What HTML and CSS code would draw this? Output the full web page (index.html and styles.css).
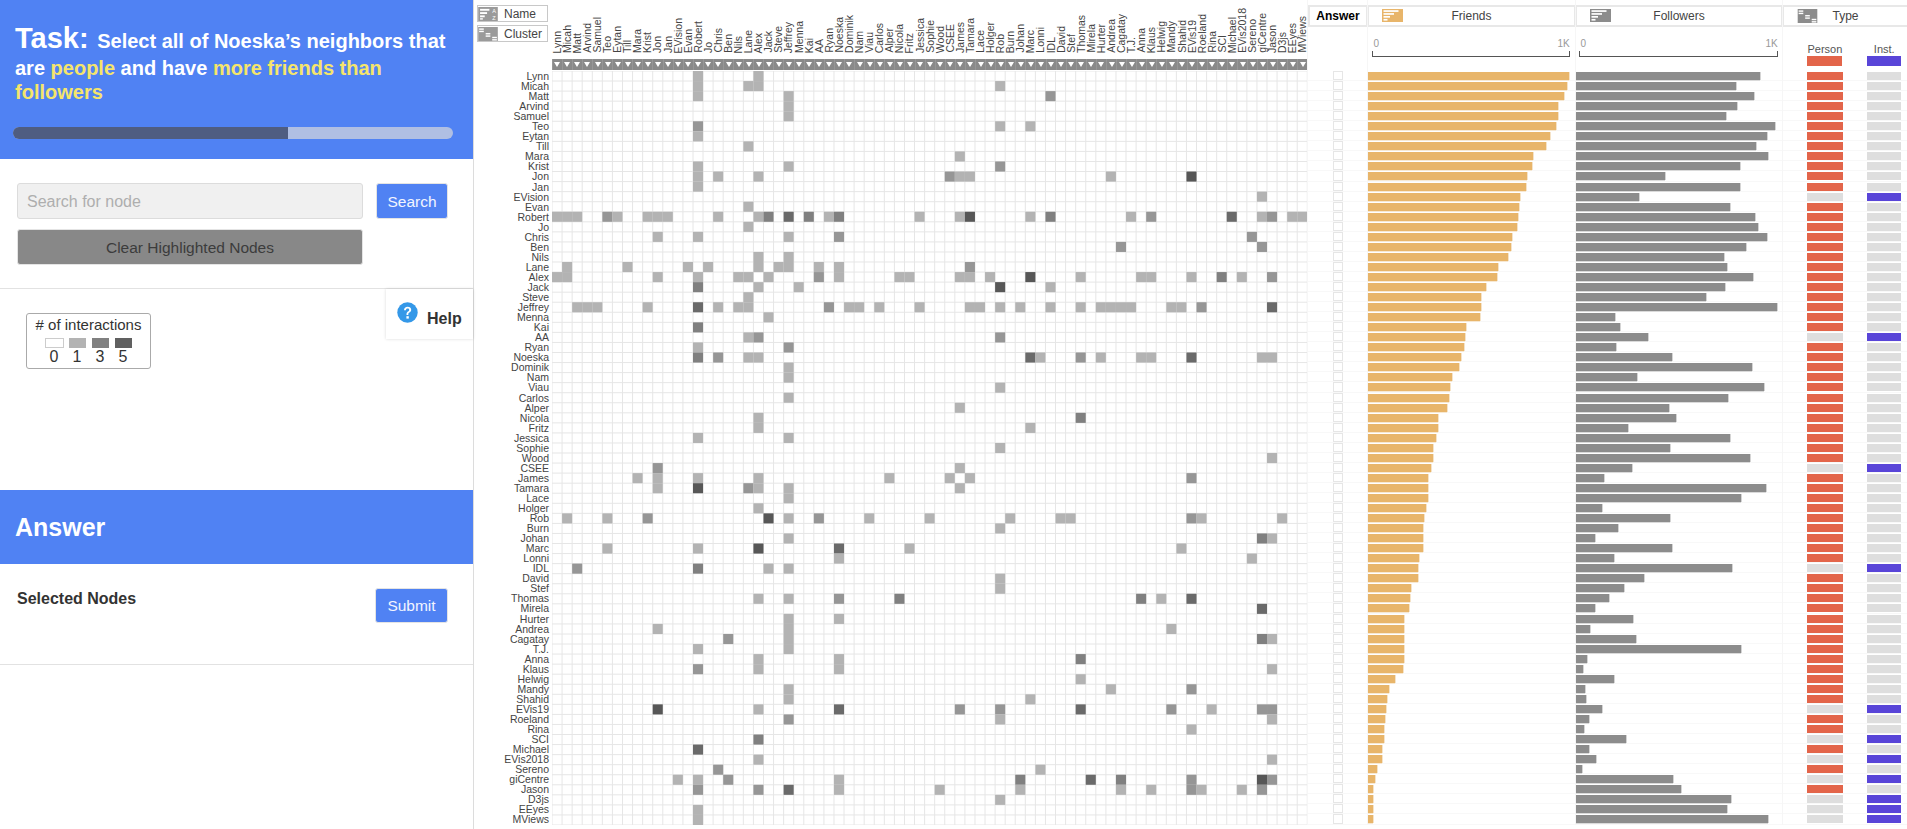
FILE: index.html
```html
<!DOCTYPE html>
<html lang="en">
<head>
    <meta charset="UTF-8">
    <title>Task</title>
    <link rel="stylesheet" href="styles.css">
</head>
<body>
<div class="app">
    <div class="sidebar">
        <div class="task">
            <div class="task-text">
                <span class="task-label">Task:</span>
                <span>Select all of Noeska’s neighbors that</span>
                <span>are</span>
                <span class="hl">people</span>
                <span>and have</span>
                <span class="hl">more friends than</span>
                <span class="hl">followers</span>
            </div>
            <div class="progress"><div class="progress-fill"></div></div>
        </div>
        <div class="search">
            <input class="search-input" type="text" placeholder="Search for node">
            <button class="btn btn-blue">Search</button>
            <button class="btn btn-clear">Clear Highlighted Nodes</button>
        </div>
        <div class="info">
            <div class="legend">
                <div class="legend-title"># of interactions</div>
                <div class="legend-scale">
                    <div class="legend-item"><span class="swatch swatch-0"></span>0</div>
                    <div class="legend-item"><span class="swatch swatch-1"></span>1</div>
                    <div class="legend-item"><span class="swatch swatch-3"></span>3</div>
                    <div class="legend-item"><span class="swatch swatch-5"></span>5</div>
                </div>
            </div>
            <div class="help">
                <svg class="help-icon" width="21" height="21" viewBox="0 0 21 21">
                    <circle cx="10.5" cy="10.5" r="10.2" fill="#3498e8"/>
                    <path d="M7 8.2c0-2.1 1.5-3.4 3.6-3.4 2.100 0 3.600 1.200 3.600 3 0 1.400-.8 2.100-1.800 2.800-.8.600-1.100 1-1.100 1.900v.4H9.500v-.6c0-1.300.5-2 1.500-2.700.8-.6 1.200-1 1.200-1.700 0-.8-.6-1.300-1.600-1.300-1 0-1.600.6-1.700 1.600z" fill="#fff"/>
                    <rect x="9.400" y="14.200" width="2.400" height="2.400" fill="#fff"/>
                </svg>
                <span class="help-text">Help</span>
            </div>
        </div>
        <div class="answer-head">Answer</div>
        <div class="answer-body">
            <div class="selected">Selected Nodes</div>
            <button class="btn btn-blue btn-submit">Submit</button>
        </div>
    </div>

    <div class="vis">
        <div class="sort-btns">
            <div class="sort-btn">
                <svg class="sort-icon" width="20" height="14" viewBox="0 0 21 15">
                    <rect width="21" height="15" fill="#9a9a9a"/>
                    <rect x="2" y="2" width="10" height="2" fill="#fff"/>
                    <rect x="2" y="5.500" width="7.500" height="2" fill="#fff"/>
                    <rect x="2" y="9" width="5" height="2" fill="#fff"/>
                    <rect x="2" y="12" width="3" height="1.500" fill="#fff"/>
                    <text x="17" y="6.500" class="az">A</text>
                    <text x="17" y="13.500" class="az">Z</text>
                </svg>
                <span>Name</span>
            </div>
            <div class="sort-btn">
                <svg class="sort-icon" width="20" height="14" viewBox="0 0 21 15">
                    <rect width="21" height="15" fill="#9a9a9a"/>
                    <rect x="1" y="1.500" width="5" height="1.500" fill="#fff"/>
                    <rect x="1" y="4" width="5" height="1.500" fill="#fff"/>
                    <rect x="8" y="6.500" width="5" height="1.500" fill="#fff"/>
                    <rect x="8" y="9" width="5" height="1.500" fill="#fff"/>
                    <rect x="15" y="10.500" width="5" height="1.500" fill="#fff"/>
                    <rect x="15" y="13" width="5" height="1.500" fill="#fff"/>
                </svg>
                <span>Cluster</span>
            </div>
        </div>

        <div class="matrix-head">
            <div class="col-labels" id="colLabels"></div>
            <div class="col-sorts" id="colSorts"></div>
        </div>

        <div class="head-col">
            <div class="tab tab-answer">Answer</div>
        </div>

        <div class="head-col">
            <div class="tab">
                <svg class="tab-icon" width="21" height="13" viewBox="0 0 21 13">
                    <rect width="21" height="13" fill="#e8b56a"/>
                    <rect x="1.500" y="1.200" width="15" height="1.700" fill="#fff"/>
                    <rect x="1.500" y="4.100" width="10.500" height="1.700" fill="#fff"/>
                    <rect x="1.500" y="7" width="6.500" height="1.700" fill="#fff"/>
                    <rect x="1.500" y="9.900" width="4" height="1.700" fill="#fff"/>
                </svg>
                <span>Friends</span>
            </div>
            <div class="axis axis-friends">
                <div class="axis-labels"><span>0</span><span>1K</span></div>
                <div class="axis-line"></div>
            </div>
        </div>

        <div class="head-col">
            <div class="tab">
                <svg class="tab-icon" width="21" height="13" viewBox="0 0 21 13">
                    <rect width="21" height="13" fill="#8c8c8c"/>
                    <rect x="1.500" y="1.200" width="15" height="1.700" fill="#fff"/>
                    <rect x="1.500" y="4.100" width="10.500" height="1.700" fill="#fff"/>
                    <rect x="1.500" y="7" width="6.500" height="1.700" fill="#fff"/>
                    <rect x="1.500" y="9.900" width="4" height="1.700" fill="#fff"/>
                </svg>
                <span>Followers</span>
            </div>
            <div class="axis axis-followers">
                <div class="axis-labels"><span>0</span><span>1K</span></div>
                <div class="axis-line"></div>
            </div>
        </div>

        <div class="head-col">
            <div class="tab tab-type">
                <svg class="tab-icon" width="21" height="14" viewBox="0 0 21 15">
                    <rect width="21" height="15" fill="#8c8c8c"/>
                    <rect x="1" y="1.500" width="5" height="1.500" fill="#fff"/>
                    <rect x="1" y="4" width="5" height="1.500" fill="#fff"/>
                    <rect x="8" y="6.500" width="5" height="1.500" fill="#fff"/>
                    <rect x="8" y="9" width="5" height="1.500" fill="#fff"/>
                    <rect x="15" y="10.500" width="5" height="1.500" fill="#fff"/>
                    <rect x="15" y="13" width="5" height="1.500" fill="#fff"/>
                </svg>
                <span>Type</span>
            </div>
            <div class="type-legend">
                <div class="type-key"><span>Person</span><div class="key-swatch person"></div></div>
                <div class="type-key key-inst"><span>Inst.</span><div class="key-swatch inst"></div></div>
            </div>
        </div>

        <div class="row-labels" id="rowLabels"></div>
        <div class="matrix" id="matrix"></div>
        <div class="body-col answer-col" id="answerCol"></div>
        <div class="body-col" id="friendsCol"></div>
        <div class="body-col" id="followersCol"></div>
        <div class="body-col" id="typeCol"></div>
    </div>
</div>
<script src="app.js"></script>
</body>
</html>
```

FILE: styles.css
```css
*{ padding: 0; margin: 0; box-sizing: border-box;}
html,body{
    height: 100%;
    overflow: hidden;
    background: #fff;
    font-family: "Liberation Sans", Arial, sans-serif;
    color: #333;
}
.app{
    display: flex;
    width: 1907px;
    height: 829px;
}

/* left panel */
.sidebar{
    width: 474px;
    flex: none;
    border-right: 1px solid #dcdcdc;
}
.task{
    height: 159px;
    padding-top: 20px;
    background: #5082f3;
    color: #fff;
}
.task-text{
    padding: 0 15px;
    font-size: 20px;
    font-weight: bold;
    line-height: 24px;
}
.task-label{
    font-size: 29px;
    line-height: 36px;
    margin-right: 3px;
}
.hl{
    color: #f5e56b;
}
.progress{
    height: 12px;
    margin: 23px 20px 0 13px;
    border-radius: 6px;
    background: #b0bfe3;
    overflow: hidden;
}
.progress-fill{
    width: 275px;
    height: 100%;
    background: #4f5d81;
}
.search{
    height: 130px;
    display: grid;
    grid-template-columns: 346px 72px;
    grid-auto-rows: 36px;
    column-gap: 13px;
    row-gap: 10px;
    padding: 24px 0 0 17px;
    border-bottom: 1px solid #e2e2e2;
}
.search-input{
    border: 1px solid #dcdcdc;
    border-radius: 3px;
    background: #f0f0f0;
    padding: 1px 0 0 9px;
    font: 16px "Liberation Sans", Arial, sans-serif;
}
.search-input::placeholder{
    color: #aeaeae;
    opacity: 1;
}
.search .btn{
    padding-top: 1px;
}
.btn{
    border: 1px solid #e4e4e4;
    border-radius: 3px;
    font: 15.5px "Liberation Sans", Arial, sans-serif;
}
.btn-blue{
    background: #5082f3;
    color: #f2f5ff;
}
.btn-clear{
    background: #888;
    color: #3c3c3c;
}
.info{
    position: relative;
    height: 201px;
    padding: 24px 0 0 26px;
}
.legend{
    width: 125px;
    height: 56px;
    border: 1.5px solid #aaa;
    border-radius: 3px;
    text-align: center;
}
.legend-title{
    font-size: 15px;
    line-height: 21px;
}
.legend-scale{
    display: flex;
    justify-content: center;
    padding-top: 2.5px;
}
.legend-item{
    width: 23px;
    font-size: 16px;
    line-height: 16px;
    text-align: center;
}
.swatch{
    display: block;
    width: 17px;
    height: 10px;
    margin: 0 auto 1px;
}
.swatch-0{
    width: 19px;
    background: #fff;
    border: 1px solid #ccc;
}
.swatch-1{ background: #b3b3b3;}
.swatch-3{ background: #808080;}
.swatch-5{ background: #606060;}
.help{
    position: absolute;
    top: 0;
    right: 0;
    width: 87px;
    height: 50px;
    background: #fff;
    box-shadow: 0 0 3px rgba(0,0,0,.15);
}
.help-icon{
    position: absolute;
    left: 11px;
    top: 13px;
}
.help-text{
    position: absolute;
    left: 41px;
    top: 21px;
    font-size: 16px;
    font-weight: bold;
}
.answer-head{
    height: 74px;
    display: flex;
    align-items: center;
    padding-left: 15px;
    background: #5082f3;
    color: #fff;
    font-size: 25px;
    font-weight: bold;
}
.answer-body{
    height: 101px;
    display: flex;
    justify-content: space-between;
    align-items: flex-start;
    padding: 24px 25px 0 17px;
    border-bottom: 1px solid #e2e2e2;
}
.selected{
    margin-top: 2px;
    font-size: 16px;
    font-weight: bold;
}
.btn-submit{
    width: 73px;
    height: 35px;
}

/* matrix and bars */
.vis{
    flex: 1;
    display: grid;
    grid-template-columns: 77.7px 755.3px 60px 208px 207px 125px;
    grid-template-rows: 71px 754px;
}
.sort-btns{
    display: flex;
    flex-direction: column;
    gap: 3px;
    padding: 5px 0 0 3px;
}
.sort-btn{
    display: flex;
    align-items: center;
    width: 71px;
    height: 17px;
    border: 1.5px solid #c8c8c8;
    font-size: 12px;
    color: #444;
}
.sort-icon{
    flex: none;
    margin-right: 6px;
}
.az{
    font-size: 6px;
    fill: #fff;
    text-anchor: middle;
}
.matrix-head{
    display: flex;
    flex-direction: column;
}
.col-labels{
    display: flex;
    height: 53px;
    align-items: flex-end;
    margin-bottom: 6px;
}
.col-label{
    flex: 1 1 0;
    min-width: 0;
    display: flex;
    justify-content: center;
    writing-mode: vertical-rl;
    transform: rotate(180deg);
    font-size: 10.5px;
    line-height: 10px;
    white-space: nowrap;
    color: #444;
}
.col-sorts{
    display: flex;
    height: 11px;
    background: #8a8a8a;
}
.col-sort{
    flex: 1 1 0;
    display: flex;
    justify-content: center;
    padding-top: 3px;
    border-left: 1px solid #979797;
}
.col-sort::after{
    content: "";
    border-left: 3px solid transparent;
    border-right: 3px solid transparent;
    border-top: 5px solid #fff;
    height: 0;
}
.head-col{
    border-left: 1px solid #f6f6f6;
}
.tab{
    display: flex;
    align-items: center;
    position: relative;
    justify-content: center;
    height: 22px;
    margin-top: 5px;
    border: 2px solid #e8e8e8;
    border-left-width: 1px;
    border-right-width: 1px;
    font-size: 12px;
    color: #444;
}
.tab-answer{
    color: #000;
    font-weight: bold;
    border-left-width: 2px;
}
.tab-icon{
    position: absolute;
    left: 13.5px;
    top: 2px;
}
.tab-type{
    border-right: 0;
}
.axis{
    margin-top: 11px;
    font-size: 10px;
    color: #999;
}
.axis-friends{
    width: 197.4px;
    margin-left: 4.4px;
}
.axis-followers{
    width: 198.2px;
    margin-left: 3.5px;
}
.axis-labels{
    display: flex;
    justify-content: space-between;
    height: 13px;
    line-height: 12px;
    padding: 0 0 0 1px;
}
.axis-line{
    height: 6px;
    border: 1px solid #555;
    border-top: 0;
}
.type-legend{
    display: flex;
    padding-left: 24.5px;
    margin-top: 16px;
}
.type-key{
    width: 34.5px;
    font-size: 11px;
    line-height: 13px;
    text-align: center;
    color: #555;
}
.key-inst{
    margin-left: 25.5px;
    width: 33.5px;
}
.key-swatch{
    height: 10px;
}
.person{ background: #e3654a;}
.inst{ background: #5945d8;}

.row-labels{
    display: flex;
    flex-direction: column;
}
.row-label{
    flex: 1 1 0;
    padding-right: 2.7px;
    font-size: 10.5px;
    line-height: 10px;
    text-align: right;
    white-space: nowrap;
    color: #444;
}
.matrix svg{
    display: block;
}
.grid-line{
    stroke: #e6e6e6;
    stroke-width: 1;
}
.body-col{
    display: flex;
    flex-direction: column;
    border-left: 1px solid #f6f6f6;
}
.bar-row{
    flex: 1 1 0;
    display: flex;
    padding-top: 1px;
    border-bottom: 1px solid #f8f8f8;
}
.bar{
    height: 8px;
}
.bar-friends{
    background: #e8b56a;
    box-shadow: 1px 0 0 #f5e3c8, 0 1px 0 #f7e8d2;
}
.bar-followers{
    background: #8c8c8c;
    box-shadow: 1px 0 0 #d4d4d4, 0 1px 0 #dadada;
}
.check-row{
    flex: 1 1 0;
    border-bottom: 1px solid #f8f8f8;
    padding-left: 25px;
}
.check{
    display: block;
    width: 10px;
    height: 100%;
    border: 1.5px solid #e6e6e6;
    background: #fff;
}
.type-row{
    padding-left: 24.5px;
}
.type-cell{
    height: 8px;
    width: 36px;
    background: #dedede;
}
.type-cell + .type-cell{
    width: 33.5px;
    margin-left: 24px;
}
.type-cell.person{ background: #e3654a;}
.type-cell.inst{ background: #5945d8;}
```

FILE: app.js
```js
var names=["Lynn","Micah","Matt","Arvind","Samuel","Teo","Eytan","Till","Mara","Krist","Jon","Jan","EVision","Evan","Robert","Jo","Chris","Ben","Nils","Lane","Alex","Jack","Steve","Jeffrey","Menna","Kai","AA","Ryan","Noeska","Dominik","Nam","Viau","Carlos","Alper","Nicola","Fritz","Jessica","Sophie","Wood","CSEE","James","Tamara","Lace","Holger","Rob","Burn","Johan","Marc","Lonni","IDL","David","Stef","Thomas","Mirela","Hurter","Andrea","Cagatay","T.J.","Anna","Klaus","Helwig","Mandy","Shahid","EVis19","Roeland","Rina","SCI","Michael","EVis2018","Sereno","giCentre","Jason","D3js","EEyes","MViews"];

// row index -> "col" or "col:level", the other half is mirrored below
var links={
    0:"14 20",
    1:"14 19 20 44",
    2:"14 23 49:2",
    3:"23",
    4:"23",
    5:"14:2 44 47",
    6:"14",
    7:"19",
    8:"40",
    9:"14 23 44:2",
    10:"14 16 20 39:2 40 41 55 63:5",
    11:"14",
    12:"70",
    13:"19",
    14:"16 20 21:3 23:4 25:3 27 28:3 36 40 41:5 47 49:3 57 59:2 67:4 70 71:2 73 74",
    15:"19",
    16:"23 28:2 69:2",
    17:"56:2 70:2",
    18:"20 23",
    19:"20 22 23 26 28 41:2",
    20:"21 26:2 28 34 35 40 41 43 47:5 52 58 59 63 66:3 68 71:2",
    21:"24 44:5 49",
    23:"27:2 29 30 32 36 41 42 44 46 49 52 54 55 56 57 61 62 64:2 71:4",
    26:"44:2",
    28:"47:4 48 52:2 54 58 59 63:4 70 71",
    31:"44",
    33:"40",
    34:"52:3",
    35:"47",
    37:"44",
    38:"71",
    39:"40",
    40:"41 63:2",
    44:"45 50 51 63:2 64 72",
    46:"70:3 71",
    47:"62",
    48:"69",
    52:"58:3 60 63:4",
    53:"70:4",
    55:"61",
    56:"70:3 71",
    59:"71",
    61:"63:2",
    63:"65 70:2 71:2",
    64:"71",
    68:"71",
    70:"70:5 71:2"
};
var levelColor=["#fff","#b3b3b3","#969696","#808080","#6a6a6a","#575757"];

// bar ends as read off the chart, see barWidth
var friends=[695,690,683,668,667,663,646,636,603,601,586,585,568,566,564,561,549,545,538,513,510,480,468,468,465,429,426,425,417,411,393,387,385,381,358,358,351,345,344,338,332,331,330,327,322,319,318,318,309,306,305,288,284,283,270,270,269,269,268,266,245,231,225,222,220,218,218,212,211,200,195,189,189,189,189];
var followers=[1187,1124,1171,1126,1098,1226,1204,1177,1208,1135,940,1135,875,1109,1174,1180,1205,1150,1093,1101,1169,1096,1046,1231,812,825,897,815,958,1165,869,1197,1105,951,970,846,1110,955,1160,856,783,1201,1137,778,953,819,759,959,810,1114,888,836,796,760,859,747,866,1138,740,728,810,734,738,777,744,733,840,744,763,726,961,983,1111,1102,1206];
var institutions=[12,26,39,49,63,66,68,70,72,73,74];

function g(id){
    return document.getElementById(id);
}
function barWidth(end,start){
    return ((end-start)/2.583).toFixed(1)+"px";
}

var colHtml="",sortHtml="",rowHtml="",answerHtml="",friendsHtml="",followersHtml="",typeHtml="";
for(var i=0;i<names.length;i++){
    colHtml+='<div class="col-label"><span>'+names[i]+'</span></div>';
    sortHtml+='<div class="col-sort"></div>';
    rowHtml+='<div class="row-label">'+names[i]+'</div>';
    answerHtml+='<div class="check-row"><span class="check"></span></div>';
    friendsHtml+='<div class="bar-row"><div class="bar bar-friends" style="width:'+barWidth(friends[i],176)+'"></div></div>';
    followersHtml+='<div class="bar-row"><div class="bar bar-followers" style="width:'+barWidth(followers[i],711)+'"></div></div>';
    var isInst=institutions.indexOf(i)>=0;
    typeHtml+='<div class="bar-row type-row"><div class="type-cell'+(isInst?'':' person')+'"></div><div class="type-cell'+(isInst?' inst':'')+'"></div></div>';
}
g("colLabels").innerHTML=colHtml;
g("colSorts").innerHTML=sortHtml;
g("rowLabels").innerHTML=rowHtml;
g("answerCol").innerHTML=answerHtml;
g("friendsCol").innerHTML=friendsHtml;
g("followersCol").innerHTML=followersHtml;
g("typeCol").innerHTML=typeHtml;

// matrix cells
var W=755.3,H=754,cw=W/75,ch=H/75;
var svg='<svg width="'+W+'" height="'+H+'" viewBox="0 0 '+W+' '+H+'">';
for(var k=0;k<=75;k++){
    svg+='<line class="grid-line" x1="'+(k*cw)+'" y1="0" x2="'+(k*cw)+'" y2="'+H+'"/>';
    svg+='<line class="grid-line" x1="0" y1="'+(k*ch)+'" x2="'+W+'" y2="'+(k*ch)+'"/>';
}
function cell(r,c,level){
    return '<rect x="'+(c*cw)+'" y="'+(r*ch)+'" width="'+cw+'" height="'+ch+'" fill="'+levelColor[level]+'"/>';
}
for(var r in links){
    var parts=links[r].split(" ");
    for(var p=0;p<parts.length;p++){
        var bits=parts[p].split(":");
        var col=+bits[0],level=+(bits[1]||1);
        svg+=cell(+r,col,level);
        if(col!=+r){
            svg+=cell(col,+r,level);
        }
    }
}
svg+='</svg>';
g("matrix").innerHTML=svg;
```
